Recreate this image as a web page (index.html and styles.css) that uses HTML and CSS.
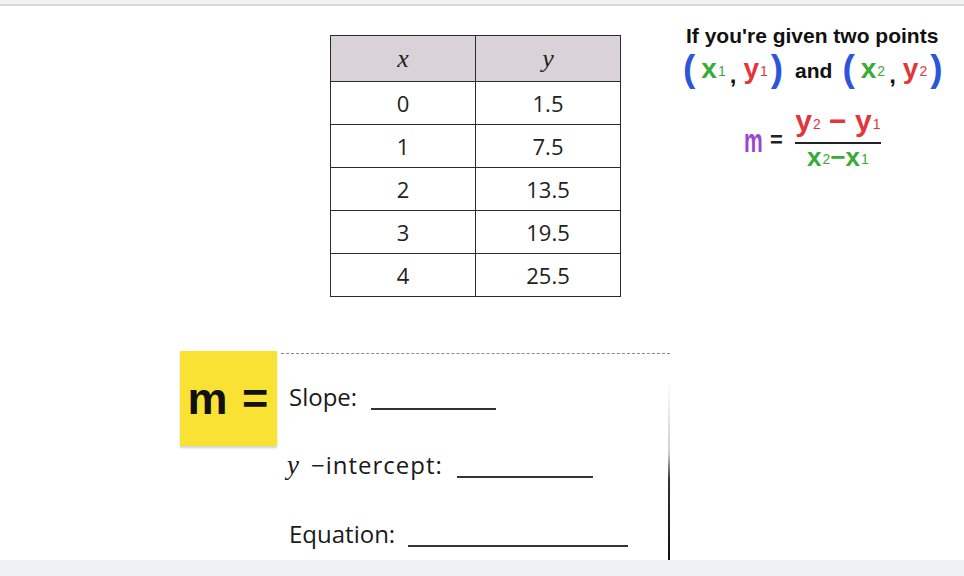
FILE: index.html
```html
<!DOCTYPE html>
<html lang="en">
<head>
<meta charset="utf-8">
<title>Slope from a table</title>
<link rel="stylesheet" href="styles.css">
</head>
<body>
<div class="topbar"></div>
<div class="main">
  <div class="left">
    <div class="table-wrap">
      <table class="xy">
        <thead>
          <tr><th><i>x</i></th><th><i>y</i></th></tr>
        </thead>
        <tbody>
          <tr><td>0</td><td>1.5</td></tr>
          <tr><td>1</td><td>7.5</td></tr>
          <tr><td>2</td><td>13.5</td></tr>
          <tr><td>3</td><td>19.5</td></tr>
          <tr><td>4</td><td>25.5</td></tr>
        </tbody>
      </table>
    </div>
    <div class="lower">
      <div class="mbox">m =</div>
      <div class="sheet">
        <div class="field f1"><span class="lbl">Slope:</span><span class="blank b1"></span></div>
        <div class="field f2"><span class="var">y</span><span class="lbl wide">&minus;intercept:</span><span class="blank b2"></span></div>
        <div class="field f3"><span class="lbl">Equation:</span><span class="blank b3"></span></div>
      </div>
    </div>
  </div>
  <div class="right">
    <div class="given">If you're given two points</div>
    <div class="points">
      <span class="par">(</span><span class="g">x<sub>1</sub></span><span class="comma">,</span><span class="r">y<sub>1</sub></span><span class="par">)</span>
      <span class="and">and</span>
      <span class="par">(</span><span class="g">x<sub>2</sub></span><span class="comma">,</span><span class="r">y<sub>2</sub></span><span class="par">)</span>
    </div>
    <div class="formula">
      <span class="mm">m</span><span class="eq">=</span>
      <span class="frac">
        <span class="num r">y<sub>2</sub> &minus; y<sub>1</sub></span>
        <span class="den g">x<sub>2</sub>&minus;x<sub>1</sub></span>
      </span>
    </div>
  </div>
</div>
<div class="bottombar"></div>
</body>
</html>
```

FILE: styles.css
```css
html, body {
  margin: 0;
  padding: 0;
}
body {
  width: 964px;
  height: 576px;
  overflow: hidden;
  background: #ffffff;
  font-family: "Open Sans", "Liberation Sans", sans-serif;
  color: #1e1e1e;
}
.topbar {
  height: 4px;
  background: #f2f2f2;
  border-bottom: 2px solid #d9d9d9;
}
.main {
  height: 554px;
  display: flex;
}
.left {
  width: 680px;
  flex: none;
  display: flex;
  flex-direction: column;
}
.table-wrap {
  padding-left: 330px;
  padding-top: 29px;
}
.xy {
  width: 291px;
  border-collapse: collapse;
  table-layout: fixed;
  border: 1.5px solid #2b2b2b;
}
.xy th, .xy td {
  border: 1.5px solid #2b2b2b;
  text-align: center;
  padding: 0;
}
.xy th {
  height: 45px;
  background: #d9d3d9;
  font-family: "Liberation Serif", serif;
  font-weight: normal;
  font-size: 26px;
  color: #222;
}
.xy th i {
  font-style: italic;
}
.xy td {
  height: 42px;
  font-size: 22px;
  color: #222;
}
.lower {
  display: flex;
  margin-top: 54px;
}
.mbox {
  margin-left: 180px;
  width: 97px;
  height: 95px;
  background: #fae235;
  box-shadow: 0 2px 2px rgba(0,0,0,0.18);
  display: flex;
  align-items: center;
  justify-content: center;
  font-family: "Liberation Sans", sans-serif;
  font-weight: bold;
  font-size: 45px;
  color: #111;
  letter-spacing: 1px;
}
.sheet {
  position: relative;
  margin-left: 4px;
  margin-top: 2px;
  width: 389px;
  height: 205px;
  border-top: 1.5px dashed #8a8a8a;
  padding-left: 8px;
  padding-top: 27px;
  box-sizing: border-box;
}
.sheet::after {
  content: "";
  position: absolute;
  right: 0;
  top: 28px;
  bottom: -2px;
  width: 2px;
  background: linear-gradient(to bottom, rgba(0,0,0,0) 0%, #e4e4e4 20%, #cfcfcf 40%, #333 55%, #111 100%);
}
.field {
  height: 32px;
  line-height: 32px;
  font-size: 24px;
  color: #1a1a1a;
  white-space: nowrap;
}
.f2 {
  margin-top: 36px;
}
.f3 {
  margin-top: 37px;
}
.wide {
  letter-spacing: 1px;
}
.blank {
  display: inline-block;
  height: 0;
  border-bottom: 2px solid #333;
  margin-bottom: -4px;
}
.b1 { width: 125px; margin-left: 14px; }
.b2 { width: 136px; margin-left: 14px; }
.b3 { width: 220px; margin-left: 13px; }
.var {
  font-family: "Liberation Serif", serif;
  font-style: italic;
  font-size: 27px;
  margin-right: 12px;
  margin-left: -2px;
}
.right {
  padding-top: 18px;
  padding-left: 6px;
}
.given {
  font-family: "Liberation Sans", Arial, sans-serif;
  font-weight: bold;
  font-size: 21px;
  line-height: 24px;
  color: #111;
  white-space: nowrap;
}
.points {
  display: flex;
  align-items: center;
  height: 40px;
  margin-top: 3px;
  margin-left: -3px;
  font-family: "Liberation Sans", sans-serif;
  font-weight: bold;
  white-space: nowrap;
}
.par {
  font-size: 37px;
  color: #2d55da;
  line-height: 40px;
  position: relative;
  top: -2px;
}
.g { color: #3aab37; }
.r { color: #e1363b; }
.points .g, .points .r {
  font-size: 28px;
  line-height: 40px;
  margin: 0 3px 0 6px;
}
.points sub, .formula sub {
  font-size: 14px;
  font-weight: normal;
  vertical-align: baseline;
  position: relative;
  top: -2px;
  margin-left: 1px;
}
.comma {
  font-size: 24px;
  color: #111;
  margin: 0 1px;
  position: relative;
  top: 4px;
}
.and {
  font-size: 21px;
  color: #111;
  margin: 0 10px 0 12px;
}
.formula {
  display: flex;
  align-items: center;
  margin-top: 15px;
  margin-left: 58px;
  font-family: "Liberation Sans", sans-serif;
  font-weight: bold;
}
.mm {
  font-size: 34px;
  color: #9b48cf;
  display: inline-block;
  transform: scaleX(0.62);
  transform-origin: left center;
  width: 20px;
  line-height: 40px;
}
.eq {
  font-size: 22px;
  color: #222;
  margin-left: 6px;
  margin-right: 12px;
}
.frac {
  display: inline-flex;
  flex-direction: column;
  align-items: center;
  width: 86px;
}
.num {
  font-size: 30px;
  line-height: 30px;
  border-bottom: 2px solid #222;
  width: 100%;
  text-align: center;
  padding-bottom: 1px;
}
.den {
  font-size: 26px;
  line-height: 26px;
  width: 100%;
  text-align: center;
}
.bottombar {
  height: 16px;
  background: #f0f1f3;
}
```
